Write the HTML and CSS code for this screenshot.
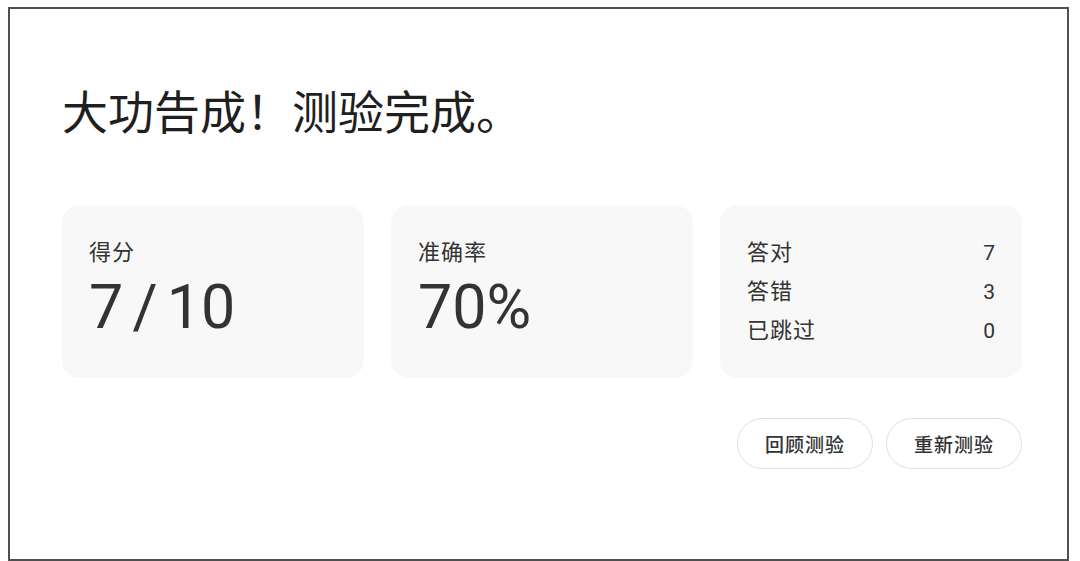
FILE: index.html
```html
<!DOCTYPE html>
<html lang="zh-CN">
<head>
<meta charset="utf-8">
<title>测验完成</title>
<link rel="stylesheet" href="styles.css">
</head>
<body>
<div class="frame">
  <h1 class="title">大功告成！测验完成。</h1>
  <div class="cards">
    <div class="card">
      <div class="label">得分</div>
      <div class="value score">7 / 10</div>
    </div>
    <div class="card">
      <div class="label">准确率</div>
      <div class="value">70%</div>
    </div>
    <div class="card">
      <div class="row"><span class="label">答对</span><span class="num">7</span></div>
      <div class="row"><span class="label">答错</span><span class="num">3</span></div>
      <div class="row"><span class="label">已跳过</span><span class="num">0</span></div>
    </div>
  </div>
  <div class="actions">
    <button class="btn">回顾测验</button>
    <button class="btn">重新测验</button>
  </div>
</div>
</body>
</html>
```

FILE: styles.css
```css
html, body {
  margin: 0;
  padding: 0;
  background: #ffffff;
}

body {
  font-family: "Noto Sans CJK SC", "Noto Sans", sans-serif;
  color: #1f1f1f;
}

.frame {
  box-sizing: border-box;
  margin: 7px 0 0 8px;
  width: 1061px;
  height: 554px;
  border: 2px solid #505050;
  padding: 73px 45px 0 52px;
}

.title {
  margin: 0;
  font-size: 46px;
  line-height: 55px;
  font-weight: 400;
  color: #1f1f1f;
}

.cards {
  margin-top: 68px;
  display: grid;
  grid-template-columns: 302px 302px 302px;
  column-gap: 27px;
}

.card {
  box-sizing: border-box;
  height: 173px;
  background: #f8f8f8;
  border-radius: 18px;
  padding: 26px 27px;
}

.label {
  font-size: 22px;
  line-height: 39px;
  letter-spacing: 1px;
  color: #333333;
}

.value {
  margin-top: 6px;
  font-family: Roboto, "Noto Sans", sans-serif;
  font-size: 61px;
  line-height: 62px;
  font-weight: 400;
  color: #333333;
}

.score {
  word-spacing: -6px;
}

.row {
  display: flex;
  justify-content: space-between;
  align-items: baseline;
  height: 39px;
}

.num {
  font-family: Roboto, "Noto Sans", sans-serif;
  font-size: 21px;
  line-height: 39px;
  color: #333333;
}

.actions {
  margin-top: 40px;
  display: flex;
  justify-content: flex-end;
  gap: 13px;
  width: 960px;
}

.btn {
  box-sizing: border-box;
  height: 51px;
  width: 136px;
  padding: 0;
  border: 1px solid #dcdee8;
  border-radius: 26px;
  background: #ffffff;
  font-family: "Noto Sans CJK SC", "Noto Sans", sans-serif;
  font-size: 19px;
  font-weight: 500;
  letter-spacing: 1px;
  color: #333333;
}
```
